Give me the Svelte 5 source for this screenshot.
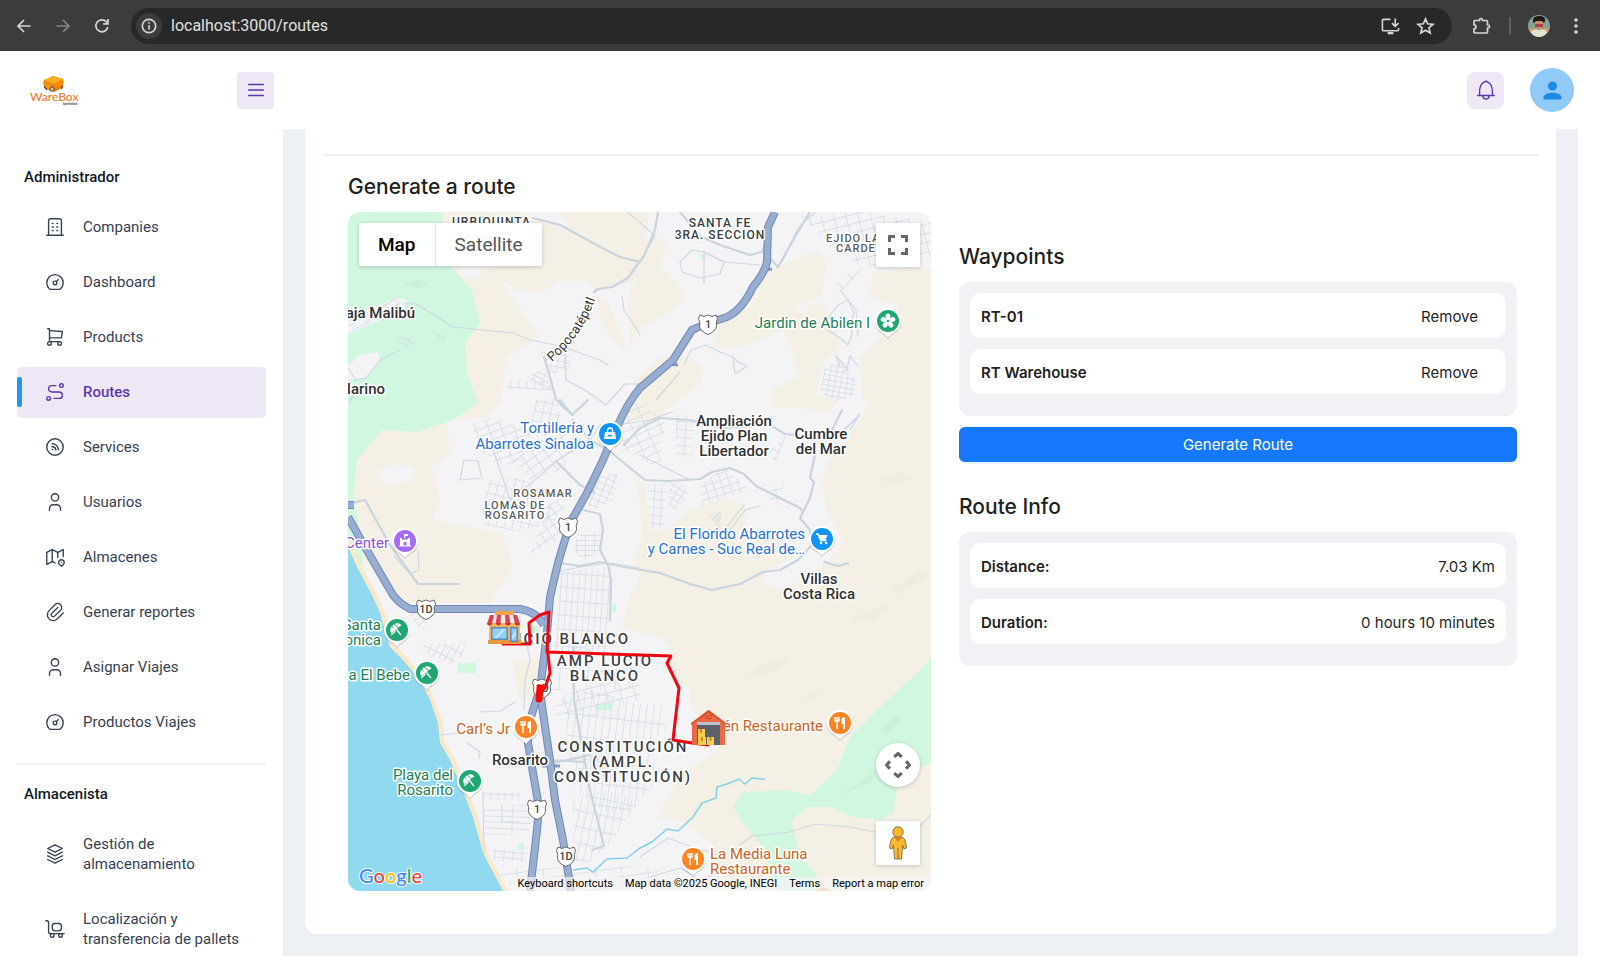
<script>
  const icons = {
    building: ['M3 21h18', 'M9 8h1', 'M9 12h1', 'M9 16h1', 'M14 8h1', 'M14 12h1', 'M14 16h1', 'M5 21V5a2 2 0 0 1 2-2h10a2 2 0 0 1 2 2v16'],
    dashboard: ['M12 11a2 2 0 1 0 0 4a2 2 0 1 0 0-4', 'M13.45 11.55L15.5 9.5', 'M6.4 20a9 9 0 1 1 11.2 0z'],
    cart: ['M6 17a2 2 0 1 0 0 4a2 2 0 1 0 0-4', 'M17 17a2 2 0 1 0 0 4a2 2 0 1 0 0-4', 'M17 17H6V3H4', 'M6 5l14 1l-1 7H6'],
    route: ['M3 19a2 2 0 1 0 4 0a2 2 0 1 0-4 0', 'M19 7a2 2 0 1 0 0-4a2 2 0 0 0 0 4z', 'M11 19h5.5a3.5 3.5 0 0 0 0-7h-8a3.5 3.5 0 0 1 0-7H13'],
    feed: ['M12 3a9 9 0 1 0 0 18a9 9 0 1 0 0-18', 'M9 8.500c4 0 6.500 3 6.500 6.500', 'M8.500 11.500c2.500 0 4 1.500 4.500 3.500', 'M9 14.500l.8.5'],
    user: ['M12 3a4 4 0 1 0 0 8a4 4 0 1 0 0-8', 'M6 21v-2a4 4 0 0 1 4-4h4a4 4 0 0 1 4 4v2'],
    map: ['M12 18.500l-3-1.500l-6 3V7l6-3l6 3l6-3v7.500', 'M9 4v13', 'M15 7v5.500', 'M21.121 20.121a3 3 0 1 0-4.242 0c.418.419 1.125 1.045 2.121 1.879c1.051-.89 1.759-1.516 2.121-1.879z', 'M19 18v.01'],
    clip: ['M15 7l-6.500 6.500a1.500 1.500 0 0 0 3 3L18 10a3 3 0 0 0-6-6l-6.500 6.500a4.500 4.500 0 0 0 9 9L21 13'],
    stack: ['M12 2L4 6l8 4l8-4l-8-4', 'M4 10l8 4l8-4', 'M4 14l8 4l8-4', 'M4 18l8 4l8-4'],
    trolley: ['M2 3h1a2 2 0 0 1 2 2v10a2 2 0 0 0 2 2h15', 'M9 9a3 3 0 0 1 3-3h4a3 3 0 0 1 3 3v2a3 3 0 0 1-3 3h-4a3 3 0 0 1-3-3z', 'M9 17a2 2 0 1 0 0 4a2 2 0 1 0 0-4', 'M18 17a2 2 0 1 0 0 4a2 2 0 1 0 0-4'],
  };

  const groups = [
    {
      title: 'Administrador',
      items: [
        ['Companies', 'building'],
        ['Dashboard', 'dashboard'],
        ['Products', 'cart'],
        ['Routes', 'route'],
        ['Services', 'feed'],
        ['Usuarios', 'user'],
        ['Almacenes', 'map'],
        ['Generar reportes', 'clip'],
        ['Asignar Viajes', 'user'],
        ['Productos Viajes', 'dashboard'],
      ],
    },
    {
      title: 'Almacenista',
      items: [
        ['Gestión de almacenamiento', 'stack'],
        ['Localización y transferencia de pallets', 'trolley'],
      ],
    },
  ];
  const active = 'Routes';

  let waypoints = $state(['RT-01', 'RT Warehouse']);
  const info = [
    ['Distance:', '7.03 Km'],
    ['Duration:', '0 hours 10 minutes'],
  ];
  const remove = (name) => (waypoints = waypoints.filter((w) => w !== name));

  const land = [
    '442,212 520,212 545,222 580,238 625,248 655,236 668,245 660,265 640,275 625,285 595,290 585,281 560,281 540,293 515,290 500,277 508,293 540,337 507,357 500,403 487,417 447,420 450,453 432,467 440,503 432,520 503,533 513,567 490,603 403,603 350,545 350,420 440,400 440,300',
    '596,296 606,300 620,330 627,353 612,340 600,320',
    '560,212 650,212 645,238 662,268 683,290 685,302 662,316 640,328 630,344 628,300 637,275 606,262 580,240',
    '777,267 817,250 827,263 822,297 800,305 825,303 833,323 840,347 823,363 817,397 838,400 830,413 800,408 770,407 773,390 797,377 793,353 783,330 740,348 713,347 718,323 750,307 767,273',
    '637,378 660,358 690,356 702,368 700,385 672,405 655,420 628,420 636,400',
    '931,267 873,273 870,297 900,307 890,330 860,357 862,400 870,402 860,420 827,463 822,483 827,510 843,543 830,560 805,578 785,592 765,584 763,573 795,556 775,538 747,530 745,505 725,497 690,510 665,530 650,530 645,484 634,478 640,500 642,540 632,560 640,575 628,600 622,628 662,638 674,655 662,668 690,690 690,703 720,750 683,773 657,817 683,822 712,843 720,891 931,891',
    '513,660 540,660 536,690 530,702 520,700 514,680',
  ];
  const parks = [
    '348,212 442,212 446,262 472,290 480,323 465,343 467,373 478,403 453,420 417,432 382,430 357,460 353,500 357,513 363,567 348,547',
    '931,658 917,673 880,707 860,727 850,737 837,770 810,795 783,790 743,792 733,807 743,823 763,847 773,877 783,891 822,891 815,873 800,857 792,820 807,807 830,807 853,817 880,820 893,813 897,787 920,767 931,763',
    '458,663 476,663 476,673 458,673',
    '596,704 612,703 611,710 596,710',
    '518,843 524,843 524,850 518,850',
    '698,256 708,252 704,260',
    '612,604 616,604 616,612 612,612',
    '530,626 540,626 540,633 530,633',
  ];
  const clearings = [
    '458,268 482,266 480,278 466,279 458,274',
    '348,318 395,298 407,300 404,310 368,325 348,334',
    '348,366 360,355 378,352 380,362 366,377 348,380',
    '377,470 400,464 414,468 412,480 384,486',
    '795,306 806,303 808,312 798,313',
  ];

  // Street grids: outline, rotation and block size.
  const districts = [
    { p: '348,318 395,298 402,304 370,324 348,332', a: -30, w: 12, h: 6 },
    { p: '396,338 409,335 415,343 404,350', a: 30, w: 4, h: 6 },
    { p: '540,352 569,345 570,368 552,374', a: 10, w: 6, h: 6 },
    { p: '507,381 548,382 556,390 507,389', a: 4, w: 8, h: 7 },
    { p: '526,376 545,368 553,395', a: 28, w: 9, h: 5 },
    { p: '536,400 556,398 562,424 540,440 530,430', a: 12, w: 8, h: 10 },
    { p: '472,425 490,418 532,430 520,462 498,466 480,450', a: -20, w: 12, h: 7 },
    { p: '512,460 562,430 586,440 560,470 530,480', a: -35, w: 11, h: 8 },
    { p: '490,480 520,478 548,492 556,520 522,532 484,525 482,500', a: 14, w: 8, h: 10 },
    { p: '548,505 566,496 560,538 530,556', a: -35, w: 8, h: 9 },
    { p: '598,476 618,473 614,500 592,510 588,504', a: 22, w: 7, h: 6 },
    { p: '577,536 602,530 602,550 584,560 574,552', a: 0, w: 9, h: 5 },
    { p: '560,572 612,566 610,612 606,652 554,650', a: 4, w: 6, h: 14 },
    { p: '630,400 665,418 660,470 625,450 620,425', a: -24, w: 13, h: 8 },
    { p: '676,414 695,416 692,460 676,455', a: 5, w: 9, h: 8 },
    { p: '648,484 667,484 664,528 650,528', a: 3, w: 7, h: 8 },
    { p: '670,480 690,490 680,508 668,510', a: 32, w: 6, h: 6 },
    { p: '700,484 724,468 750,490 728,497 702,506', a: -18, w: 8, h: 7 },
    { p: '708,516 722,511 720,528', a: 50, w: 5, h: 3 },
    { p: '768,492 784,480 782,494 778,506 770,500', a: -12, w: 8, h: 8 },
    { p: '768,452 786,434 782,450 776,462', a: 25, w: 7, h: 8 },
    { p: '800,216 860,212 931,222 931,258 878,266 856,264 830,244', a: -14, w: 12, h: 9 },
    { p: '825,366 842,362 846,372 858,382 854,395 836,402 820,392', a: 10, w: 6, h: 5 },
    { p: '836,284 856,264 864,270 842,290', a: 42, w: 9, h: 14 },
    { p: '690,612 700,612 700,640 690,640', a: 10, w: 30, h: 30 },
    { p: '640,704 662,704 667,730 652,740 655,784 632,810 606,812 575,790 562,700 590,690', a: 7, w: 7, h: 22 },
    { p: '553,700 640,664 640,700 592,716 556,720', a: -14, w: 14, h: 9 },
    { p: '553,640 640,660 640,690 553,690', a: 5, w: 14, h: 22 },
    { p: '572,800 606,790 640,800 608,846 590,862 574,862', a: 12, w: 7, h: 16 },
    { p: '484,792 520,793 519,800 484,800', a: 2, w: 7, h: 8 },
    { p: '484,806 530,804 530,834 484,835', a: 2, w: 60, h: 6 },
    { p: '492,849 526,851 526,863 494,860', a: 5, w: 9, h: 6 },
    { p: '408,610 432,606 424,630 416,624', a: -38, w: 8, h: 6 },
    { p: '420,645 466,643 462,656 452,664 430,656', a: 28, w: 6, h: 10 },
    { p: '420,870 640,866 660,872 640,891 560,891', a: -8, w: 26, h: 9 },
  ];

  const streets = [
    'M404,304L415,303L453,327L513,333L530,340L555,345L569,349L600,360L608,365',
    'M348,368L356,380L366,378L380,360L400,350',
    'M348,392L356,390L350,402',
    'M560,344L565,345L566,380L588,392L606,405L625,384L640,384',
    'M628,212L655,236L640,262',
    'M622,296L624,310L632,322L640,335',
    'M680,262L692,250L704,252L725,262L760,265',
    'M680,262L682,272L700,278L720,274L724,262L704,252L704,283',
    'M684,364L691,350L706,345L720,352L733,357L735,374L747,366L738,362L733,357',
    'M815,212L800,226L796,232L782,262',
    'M840,290L848,300L854,313L850,325L852,334L848,345L840,338L828,330L830,315L838,305L848,300L856,310L858,336',
    'M848,370L836,356L840,366M846,372L850,356L858,366',
    'M460,480L464,460L478,461L482,478Z',
    'M490,440L510,500L540,476L558,460L590,440L600,425',
    'M418,550L419,570L410,574L394,556',
    'M527,645L530,660L525,680L524,710',
    'M480,712L500,711L515,702M467,743L480,752L479,758',
    'M441,735L458,733',
    'M640,455L690,480',
    'M656,400L680,372M624,424L650,420L672,412',
    'M550,573L586,566L610,563L640,568',
    'M716,540L740,510L744,505',
    'M640,857L668,838L690,846L718,855M740,845L752,836L790,832L815,824L850,827L880,833',
    'M920,826L931,815',
    'M640,880L680,868L700,880L720,872',
    'M730,530L745,510L760,506',
    'M483,792L484,860',
    'M502,805L502,822L520,822',
    'M840,434L860,414L850,430L857,418Z',
  ];
  const avenues = [
    'M533,218L560,225L606,250L620,257L640,262',
    'M594,292L598,289L612,287L628,278L637,265L644,256L655,230L658,212',
    'M680,212L700,236L720,245L750,255L762,252L767,240',
    'M767,255L778,267L796,235L810,212',
    'M544,357L548,370L556,399L562,406L573,415',
    'M348,504L365,500L376,520L390,545L408,570L418,584L458,584',
    'M560,400L572,415L588,400',
    'M557,462L580,485L594,492M573,420L590,440L611,452L630,468L645,480L668,481L700,479L712,472L730,468L744,474L756,486L780,498L800,508L803,512L810,498L814,482L810,478L816,450',
    'M624,445L640,428L660,418L690,420L720,428L770,425L785,434L812,437L832,430L842,410',
    'M803,512L800,518L810,530L812,545L798,560L780,570L763,572L740,584L712,590L690,584L660,573L630,568L600,562L580,566L560,563',
    'M583,510L600,514L603,530L600,550L608,565L611,580L610,620',
    'M573,640L574,700L590,790L604,846L592,850',
    'M545,765L590,755M550,760L585,762',
    'M824,562L838,566L848,563',
  ];

  const highways = [
    'M348,517L365,547L390,590Q396,602 410,609L520,609Q537,612 544,625',
    'M775,212L768,227L767,262Q765,272 753,287Q742,310 727,317Q705,324 692,330L673,360L640,388Q628,402 617,427L603,460L587,493L570,523L558,563L550,597L547,633L540,690Q534,706 528,727L528,743L533,773L539,807L537,830L530,891',
    'M540,690L543,713L550,760L555,800L563,840L571,891',
    'M348,505L354,505',
  ];
  const ramps = 'M668,364L678,365M764,270L772,269M542,766L560,766';

  const routeLine =
    'M503,644L530,644L529,623L540,615L549,612L547,652L640,655L671,656L667,663L679,688L673,740L692,743L708,745M547,645L550,673L545,688L539,692';

  const labels = [
    { x: 452, y: 226, t: 'URBIQUINTA', k: 'caps mid' },
    { x: 720, y: 227, t: 'SANTA FE', k: 'caps mid c' },
    { x: 720, y: 239, t: '3RA. SECCION', k: 'caps mid c' },
    { x: 826, y: 242, t: 'EJIDO LA', k: 'caps small' },
    { x: 836, y: 252, t: 'CARDEN', k: 'caps small' },
    { x: 870, y: 328, t: 'Jardin de Abilen I', k: 'green e' },
    { x: 415, y: 318, t: 'aja Malibú', k: 'town e' },
    { x: 385, y: 394, t: 'larino', k: 'town e' },
    { x: 594, y: 433, t: 'Tortillería y', k: 'blue e' },
    { x: 594, y: 449, t: 'Abarrotes Sinaloa', k: 'blue e' },
    { x: 543, y: 497, t: 'ROSAMAR', k: 'caps small c' },
    { x: 515, y: 509, t: 'LOMAS DE', k: 'caps small c' },
    { x: 515, y: 519, t: 'ROSARITO', k: 'caps small c' },
    { x: 734, y: 426, t: 'Ampliación', k: 'town c' },
    { x: 734, y: 441, t: 'Ejido Plan', k: 'town c' },
    { x: 734, y: 456, t: 'Libertador', k: 'town c' },
    { x: 821, y: 439, t: 'Cumbre', k: 'town c' },
    { x: 821, y: 454, t: 'del Mar', k: 'town c' },
    { x: 805, y: 539, t: 'El Florido Abarrotes', k: 'blue e' },
    { x: 805, y: 554, t: 'y Carnes - Suc Real de…', k: 'blue e' },
    { x: 819, y: 584, t: 'Villas', k: 'town c' },
    { x: 819, y: 599, t: 'Costa Rica', k: 'town c' },
    { x: 389, y: 548, t: 'Center', k: 'purple e' },
    { x: 381, y: 630, t: 'Santa', k: 'green e' },
    { x: 381, y: 645, t: 'onica', k: 'green e' },
    { x: 410, y: 680, t: 'a El Bebe', k: 'green e' },
    { x: 453, y: 780, t: 'Playa del', k: 'green e' },
    { x: 453, y: 795, t: 'Rosarito', k: 'green e' },
    { x: 510, y: 734, t: 'Carl’s Jr', k: 'orange e' },
    { x: 520, y: 765, t: 'Rosarito', k: 'town c' },
    { x: 630, y: 644, t: 'ICIO BLANCO', k: 'caps large e' },
    { x: 605, y: 666, t: 'AMP LUCIO', k: 'caps large c' },
    { x: 605, y: 681, t: 'BLANCO', k: 'caps large c' },
    { x: 623, y: 752, t: 'CONSTITUCIÓN', k: 'caps large c' },
    { x: 623, y: 767, t: '(AMPL.', k: 'caps large c' },
    { x: 623, y: 782, t: 'CONSTITUCIÓN)', k: 'caps large c' },
    { x: 823, y: 731, t: 'én Restaurante', k: 'orange e' },
    { x: 710, y: 859, t: 'La Media Luna', k: 'orange' },
    { x: 710, y: 874, t: 'Restaurante', k: 'orange' },
  ];

  const shields = [
    [708, 324, '1'],
    [568, 527, '1'],
    [426, 609, '1D'],
    [542, 688, '1D'],
    [537, 809, '1'],
    [566, 856, '1D'],
  ];

  const pins = [
    [888, 321, '#1fa672', 'flower'],
    [610, 434, '#0f95f7', 'bag'],
    [822, 539, '#0f95f7', 'trolley'],
    [405, 541, '#a56cf5', 'civic'],
    [397, 630, '#1fa672', 'beach'],
    [427, 673, '#1fa672', 'beach'],
    [470, 781, '#1fa672', 'beach'],
    [526, 727, '#fb8427', 'food'],
    [840, 723, '#fb8427', 'food'],
    [693, 859, '#fb8427', 'food'],
  ];

  const shore = 'M348,547L357,567L373,597L380,613L390,647L403,660L420,680L430,700L438,723L440,743L450,760L460,783L473,817L483,853L503,891';
</script>

{#snippet icon(name)}
  <svg class="icon" viewBox="0 0 24 24" aria-hidden="true">
    {#each icons[name] as d}<path {d} />{/each}
  </svg>
{/snippet}

<div class="window">
  <header class="browser">
    <button aria-label="Back"><svg viewBox="0 0 16 16"><path d="M14.500 8H2M8 2L2 8l6 6" /></svg></button>
    <button class="dim" aria-label="Forward"><svg viewBox="0 0 16 16"><path d="M1.500 8H14M8 2l6 6l-6 6" /></svg></button>
    <button aria-label="Reload"><svg viewBox="0 0 16 16"><path d="M13.800 9a6 6 0 1 1-1.400-5.200L14 5.500M14 1v4.800H9.200" /></svg></button>
    <div class="address">
      <span class="site">
        <svg viewBox="0 0 16 16"><circle cx="8" cy="8" r="6.700" /><path d="M8 7.200v4.300M8 4.200v1.600" /></svg>
      </span>
      <input aria-label="Address" value="localhost:3000/routes" />
      <button aria-label="Install app"><svg viewBox="0 0 20 18"><path d="M10 2H2.500Q1.500 2 1.500 3v10q0 1 1 1h15q1 0 1-1v-2M15 1v8M11.500 6L15 9.500L18.500 6" /><path d="M7 16.500h6" stroke-width="2.500" /></svg></button>
      <button aria-label="Bookmark"><svg viewBox="0 0 18 18"><path d="M9 1.800l2.100 5l5.400.5l-4.100 3.500l1.300 5.300L9 13.300l-4.700 2.800l1.300-5.300L1.500 7.300l5.400-.5z" /></svg></button>
    </div>
    <button aria-label="Extensions"><svg viewBox="0 0 18 18"><path d="M2 3.500h5V3a1.500 1.500 0 0 1 3 0v.5h4q1 0 1 1V8h.5a1.500 1.500 0 0 1 0 3H15v4q0 1-1 1H2.500q-1 0-1-1v-3.200a2 2 0 0 0 0-4V4.500q0-1 1-1" /></svg></button>
    <i class="bar"></i>
    <button aria-label="Profile">
      <svg class="photo" viewBox="0 0 22 22">
        <circle cx="11" cy="11" r="11" fill="#7fa39b" />
        <path d="M1 14l5-1v4l-3 1zM21 14l-5-1v4l3 1z" fill="#dba069" />
        <path d="M3 17Q6 13 11 15q5-2 8 2q-3 5-8 5t-8-5z" fill="#e9e2cf" />
        <ellipse cx="11" cy="9" rx="5" ry="6" fill="#c58d6c" />
        <path d="M5 7Q4 1 11 1t6 5l-1 2l-2-2H8L6 8z" fill="#1d1715" />
        <path d="M7 9h8v3H7z" fill="#a5433f" />
      </svg>
    </button>
    <button class="more" aria-label="Menu"><svg class="solid" viewBox="0 0 6 18"><circle cx="3" cy="3" r="1.800" /><circle cx="3" cy="9" r="1.800" /><circle cx="3" cy="15" r="1.800" /></svg></button>
  </header>

  <header class="top">
    <a class="logo" href="#home" aria-label="WareBox">
      <svg viewBox="0 0 48 30">
        <path d="M14 5l9-4l10 3v8l-9 5l-10-4z" fill="#f99a13" />
        <path d="M14 5l9-4l10 3l-9 5z" fill="#fdae1f" />
        <path d="M24 9l9-5v8l-9 5z" fill="#ef7d0c" />
        <path d="M14 5l-1 4l11 4V9zM33 4l1 4l-10 5V9z" fill="#f28c10" />
        <path d="M14 11l3 4M31 14l2-3" stroke="#6b5334" stroke-width="1.500" />
        <circle cx="22" cy="14" r="2.200" fill="#d9c49c" stroke="#4b3c2c" />
        <text x="0" y="26" class="brand">WareBox</text>
        <text x="33" y="30" class="tag">logistics</text>
      </svg>
    </a>
    <button class="square" aria-label="Toggle menu"><svg class="icon" viewBox="0 0 24 24"><path d="M4 6h16M4 12h16M4 18h16" /></svg></button>
    <span class="grow"></span>
    <button class="square round" aria-label="Notifications">
      <svg class="icon" viewBox="0 0 24 24"><path d="M3 18h18M5 18v-4Q5 6 10 3.500q2-2 4 0Q19 6 19 14v4M8.500 18.500q.5 3.500 3.500 3.500t3.500-3.500" /></svg>
    </button>
    <button class="avatar" aria-label="Account">
      <svg viewBox="0 0 24 24"><circle cx="12" cy="8" r="4" /><path d="M12 14c-2.700 0-8 1.300-8 4v2h16v-2c0-2.700-5.300-4-8-4z" /></svg>
    </button>
  </header>

  <div class="body">
    <nav>
      {#each groups as group}
        <section>
          <h3>{group.title}</h3>
          <ul>
            {#each group.items as [label, name]}
              <li><a href="#{name}" class:active={label === active}>{@render icon(name)}<span>{label}</span></a></li>
            {/each}
          </ul>
        </section>
      {/each}
    </nav>

    <main>
      <div class="card">
        <hr />
        <div class="content">
          <h2>Generate a route</h2>
          <div class="columns">
            <div class="map">
              <svg class="canvas" viewBox="348 212 583 679" preserveAspectRatio="xMidYMid slice" role="img" aria-label="Map">
                <defs>
                  {#each districts as d, i}
                    <pattern id="grid{i}" width={d.w} height={d.h} patternUnits="userSpaceOnUse" patternTransform="rotate({d.a})">
                      <path d="M0,0H{d.w}M0,0V{d.h}" stroke="#d2dae3" stroke-width="1.400" fill="none" />
                    </pattern>
                  {/each}
                  <path id="popo" d="M552,362Q582,336 595,300" />
                </defs>
                <rect x="348" y="212" width="583" height="679" fill="#f4f4f6" />
                {#each land as p}<polygon points={p} fill="#f5f0e5" />{/each}
                <path d="M880,480l20,-8l12,6l-18,8zM850,620l30,-14l12,2l-24,14zM890,590l30,-20l8,4l-26,20zM740,680l40,-10l8,-14l-22,8zM800,700l20,-12l6,6z" fill="#efe9dc" opacity=".6" />
                {#each parks as p}<polygon points={p} fill="#d1f7e0" />{/each}
                <path d="M402,284l14,-4l14,2l-10,6zM432,330l16,8l-6,4zM840,795l18,-12l20,-14l-8,14zM880,730l14,-14l8,2l-14,16z" fill="#c4efd5" opacity=".6" />
                {#each clearings as p}<polygon points={p} fill="#f4f4f6" />{/each}
                {#each districts as d, i}<polygon points={d.p} fill="url(#grid{i})" />{/each}
                <g fill="none" stroke-linejoin="round" stroke-linecap="round">
                  <path d={shore} stroke="#fae8c8" stroke-width="9" />
                  {#each streets as d}<path {d} stroke="#cfd8e2" stroke-width="1.200" />{/each}
                  {#each avenues as d}<path {d} stroke="#c9d4dd" stroke-width="2.200" />{/each}
                </g>
                <path d="{shore}L348,891Z" fill="#90d9ee" />
                <path d="M573,870L587,868L593,872L607,859L627,858L640,848L652,842L667,829L678,831L693,817L702,803L716,798L717,787L727,784L739,779L745,784L752,778L765,779" fill="none" stroke="#84cfe8" stroke-width="1.500" />
                <g fill="none" stroke-linejoin="round">
                  <path d={ramps} stroke="#8499c0" stroke-width="3" />
                  {#each highways as d}<path {d} stroke="#7288b4" stroke-width="8" />{/each}
                  {#each highways as d}<path {d} stroke="#98add0" stroke-width="6" />{/each}
                </g>
                {#each shields as [x, y, n]}
                  <g transform="translate({x} {y})">
                    <path d="M-8,-9l4,1.500l4,-1.500l4,1.500l4,-1.500l1.500,3.500q-2,4 -1,8q-1,5 -8.500,8q-7.500,-3 -8.500,-8q1,-4 -1,-8z" fill="#fff" stroke="#666" />
                    <text class="shield" y="4">{n}</text>
                  </g>
                {/each}
                {#each labels as l}<text x={l.x} y={l.y} class={l.k}>{l.t}</text>{/each}
                <text class="street"><textPath href="#popo">Popocatépetl</textPath></text>
                {#each pins as [x, y, color, glyph]}
                  <g transform="translate({x} {y})">
                    <path d="M0,17Q-3,13 -9,9.500A13,13 0 1 1 9,9.500Q3,13 0,17z" fill="#000" opacity=".22" transform="translate(0 1)" />
                    <path d="M0,17Q-3,13 -9,9.500A13,13 0 1 1 9,9.500Q3,13 0,17z" fill="#fff" />
                    <circle r="11" fill={color} />
                    {#if glyph === 'flower'}
                      {#each [0, 72, 144, 216, 288] as r}<ellipse cx="0" cy="-4.600" rx="2.400" ry="3" fill="#fff" transform="rotate({r})" />{/each}
                      <circle r="1.800" fill="none" stroke="#fff" stroke-width="1" />
                    {:else if glyph === 'bag'}
                      <path d="M-5,-2h10l1,7h-12z" fill="#fff" />
                      <path d="M-2.500,-2v-1.500a2.500,2.500 0 0 1 5,0V-2" fill="none" stroke="#fff" stroke-width="1.300" />
                      <path d="M-2,1q2,2 4,0" stroke={color} stroke-width="1.200" fill="none" />
                    {:else if glyph === 'trolley'}
                      <path d="M-6,-5h2l2.500,6.500h6" fill="none" stroke="#fff" stroke-width="1.300" />
                      <path d="M-3.500,-4h9l-2,5h-5z" fill="#fff" />
                      <circle cx="-1" cy="4" r="1.300" fill="#fff" /><circle cx="4" cy="4" r="1.300" fill="#fff" />
                    {:else if glyph === 'civic'}
                      <path d="M-5,5v-8h2v1.500h6v-1.500h2v8h-3.500v-4h-3v4zM-1,-3v-4h4v2h-2.800v2z" fill="#fff" />
                      <path d="M-6,5h12" stroke="#fff" />
                    {:else if glyph === 'beach'}
                      <g transform="rotate(-38)">
                        <path d="M-6.500,-1A6.500,5.500 0 0 1 -1.800,-6.200L-2,-1zM-1,-6.400h2l1.200,5.400h-4.400zM1.800,-6.200A6.500,5.500 0 0 1 6.500,-1H3z" fill="#fff" />
                        <path d="M0,-1V6.500" stroke="#fff" stroke-width="1.400" />
                      </g>
                      <path d="M-6,5l4.500,-4" stroke="#fff" stroke-width="1.400" />
                    {:else}
                      <path d="M-5,-6v4.500M-3,-6v4.500M-1,-6v4.500M-5.500,-2h5M-3,-2V6" stroke="#fff" stroke-width="1.400" fill="none" />
                      <path d="M1.500,1V-3Q1.500,-6 5,-6V6H3.200V1z" fill="#fff" />
                    {/if}
                  </g>
                {/each}
                <circle cx="823" cy="900" r="12" fill="#f7a36c" />
                <path d={routeLine} fill="none" stroke="#ee0610" stroke-width="3" stroke-linejoin="round" stroke-linecap="round" />
                <path d="M540,688L539,699" stroke="#ff0505" stroke-width="7" stroke-linecap="round" />
                <g transform="translate(487 611)">
                  <path d="M2,10h31v22H2z" fill="#fbb257" />
                  <path d="M1,29h33v4H1z" fill="#e9963f" />
                  <path d="M8,0h19v5H8z" fill="#f7a24a" />
                  <path d="M3,4h29l3,8H0z" fill="#e9eef4" />
                  <path d="M3,4h4l-2,9H0zM10,4h4l-.500,9h-5zM18,4h4l1.500,9h-5zM26,4h4l3,9h-5z" fill="#e0434c" />
                  <path d="M0,12h5a2.500,2.500 0 0 1-5,0zM9,12h5a2.500,2.500 0 0 1-5,0zM18.500,12h5a2.500,2.500 0 0 1-5,0zM28,12h5a2.500,2.500 0 0 1-5,0z" fill="#c9303c" />
                  <path d="M4,16h17v13H4zM23,16h8v15h-8z" fill="#5f89b8" />
                  <path d="M5.500,17.500h14v10h-14zM24.500,17.500h5v12h-5z" fill="#8fd0f5" />
                  <path d="M7,27l9,-9h3l-9,9zM25,25l4,-5v4l-4,4z" fill="#c6e8fb" />
                </g>
                <g transform="translate(691 710)">
                  <path d="M1,35V13L17.500,0L34,13v22z" fill="#ee6844" />
                  <path d="M0,13L17.500,0L35,13v2L17.500,3L0,15z" fill="#d9532f" />
                  <path d="M14,6h7M14,8.500h7" stroke="#c5462a" stroke-width="1.200" />
                  <path d="M6,12h23v23H6z" fill="#5b626c" />
                  <path d="M6,12h23v3H6z" fill="#b9c2cb" />
                  <path d="M7,19h7v8H7zM7,27h8v8H7zM16,27h7v8h-7z" fill="#fbcf4b" />
                  <path d="M9,19h2v4H9zM10,27h2v4h-2zM18.500,27h2v4h-2z" fill="#c98a2b" />
                </g>
                <g class="google" transform="translate(359 883)">
                  <text><tspan fill="#4285f4">G</tspan><tspan fill="#ea4335">o</tspan><tspan fill="#fbbc05">o</tspan><tspan fill="#4285f4">g</tspan><tspan fill="#34a853">l</tspan><tspan fill="#ea4335">e</tspan></text>
                </g>
              </svg>

              <div class="types">
                <button class="on">Map</button>
                <button>Satellite</button>
              </div>
              <button class="ctl full" aria-label="Toggle fullscreen view"><svg viewBox="0 0 20 20"><path d="M1.500 7V1.500H7M13 1.500h5.500V7M18.500 13v5.500H13M7 18.500H1.500V13" /></svg></button>
              <div class="lower">
                <button class="ctl pan" aria-label="Map camera controls"><svg viewBox="0 0 24 24"><path d="M8.500 4.500L12 1.500l3.500 3M8.500 19.500l3.500 3l3.500-3M4.500 8.500L1.500 12l3 3.500M19.500 8.500l3 3.500l-3 3.500" /></svg></button>
                <button class="ctl" aria-label="Street View Pegman">
                  <svg class="pegman" viewBox="0 0 20 34"><path d="M6 11h8q3 1 3.500 5l1 6l-2.500 1l-1.500-4L13.500 33h-7L5.500 19L4 23l-2.500-1l1-6Q3 12 6 11z" /><path d="M6.500 11.500h7L10 16z" fill="#e27b28" stroke="none" /><path d="M10 22v11" /><circle cx="10" cy="6" r="5.200" /></svg>
                </button>
              </div>
              <div class="credits">
                <a href="#keys">Keyboard shortcuts</a><span>Map data ©2025 Google, INEGI</span><a href="#terms">Terms</a><a href="#report">Report a map error</a>
              </div>
            </div>

            <div class="side">
              <h2>Waypoints</h2>
              <ul class="panel">
                {#each waypoints as name}
                  <li><strong>{name}</strong><button class="link" onclick={() => remove(name)}>Remove</button></li>
                {/each}
              </ul>
              <button class="primary">Generate Route</button>
              <h2 class="next">Route Info</h2>
              <ul class="panel">
                {#each info as [label, value]}
                  <li><strong>{label}</strong><span>{value}</span></li>
                {/each}
              </ul>
            </div>
          </div>
        </div>
      </div>
    </main>
  </div>
</div>

<style>
  :global(body) {
    margin: 0;
    background: #fff;
  }
  * {
    box-sizing: border-box;
  }
  button,
  input {
    font: inherit;
    border: 0;
    padding: 0;
    background: none;
    color: inherit;
    cursor: pointer;
  }
  ul {
    list-style: none;
    margin: 0;
    padding: 0;
  }
  a {
    color: inherit;
    text-decoration: none;
  }
  .window {
    display: flex;
    flex-direction: column;
    height: 100vh;
    overflow: hidden;
    font-family: Roboto, sans-serif;
  }
  .icon {
    fill: none;
    stroke: currentColor;
    stroke-width: 1.500;
    stroke-linecap: round;
    stroke-linejoin: round;
  }

  .browser {
    display: flex;
    align-items: center;
    flex: none;
    height: 51px;
    padding: 0 16px;
    background: #3c3c3c;
    color: #d5d5d5;
  }
  .browser button {
    display: flex;
  }
  .browser svg {
    width: 16px;
    height: 16px;
    fill: none;
    stroke: currentColor;
    stroke-width: 1.700;
  }
  .browser > button {
    margin-right: 23px;
  }
  .browser .dim {
    color: #858585;
  }
  .address {
    display: flex;
    align-items: center;
    flex: 1;
    height: 36px;
    margin: 0 20px 0 -2px;
    padding: 0 17px 0 5px;
    gap: 16px;
    border-radius: 18px;
    background: #282828;
  }
  .site {
    display: grid;
    place-items: center;
    width: 26px;
    height: 26px;
    border-radius: 13px;
    background: #3c3c3c;
  }
  .address input {
    flex: 1;
    margin-left: -7px;
    font-size: 16px;
    color: #e0e0e0;
    outline: 0;
  }
  .address button svg,
  .address + button svg {
    width: 19px;
    height: 18px;
  }
  .browser .address + button {
    margin-right: 18px;
  }
  .bar {
    width: 2px;
    height: 18px;
    margin-right: 17px;
    background: #5e5e5e;
  }
  .browser svg.photo {
    width: 22px;
    height: 22px;
    stroke: none;
  }
  .browser .more {
    margin: 0 5px 0 0;
  }
  .browser .solid {
    width: 6px;
    height: 18px;
    fill: currentColor;
    stroke: none;
  }

  .top {
    display: flex;
    align-items: center;
    flex: none;
    height: 78px;
    padding: 0 26px 0 30px;
  }
  .logo {
    width: 207px;
  }
  .logo svg {
    display: block;
    width: 48px;
    height: 30px;
  }
  .brand {
    font: 500 12px Lato, sans-serif;
    fill: #ee7b35;
  }
  .tag {
    font: 700 4px Lato, sans-serif;
    fill: #333;
  }
  .square {
    display: grid;
    place-items: center;
    width: 37px;
    height: 37px;
    border-radius: 4px;
    background: #ede7f6;
    color: #5e35b1;
  }
  .square svg {
    width: 22px;
    height: 22px;
  }
  .round {
    border-radius: 8px;
    margin-right: 26px;
  }
  .grow {
    flex: 1;
  }
  .avatar {
    display: grid;
    place-items: center;
    width: 44px;
    height: 44px;
    border-radius: 50%;
    background: #90caf9;
  }
  .avatar svg {
    width: 27px;
    height: 27px;
    fill: #1e88e5;
  }

  .body {
    display: flex;
    flex: 1;
    min-height: 0;
    padding-right: 22px;
  }
  nav {
    flex: none;
    width: 283px;
    padding: 0 17px;
    overflow: hidden;
  }
  section {
    padding-top: 19px;
  }
  section:first-child {
    padding-top: 38px;
  }
  section + section {
    margin-top: 15px;
    border-top: 2px solid #eef2f4;
  }
  h3 {
    margin: 0 0 15px;
    padding-left: 7px;
    font-size: 15px;
    line-height: 20px;
    font-weight: 500;
    color: #121926;
  }
  nav li {
    margin-bottom: 4px;
  }
  nav a {
    position: relative;
    display: flex;
    align-items: center;
    gap: 17px;
    padding: 15px 20px 16px 27px;
    border-radius: 5px;
    font-size: 15px;
    line-height: 20px;
    color: #364152;
  }
  nav .icon {
    flex: none;
    width: 22px;
    height: 22px;
    margin: -1px 0;
  }
  nav .active {
    background: #ede7f6;
    color: #5e35b1;
    font-weight: 500;
  }
  nav .active::before {
    content: '';
    position: absolute;
    left: 0;
    top: 10px;
    bottom: 11px;
    width: 5px;
    border-radius: 2px;
    background: #2196f3;
  }

  main {
    flex: 1;
    min-width: 0;
    padding: 0 22px;
    background: #edf1f6;
    overflow: hidden;
    font-family: Inter, sans-serif;
    font-size: 15px;
    color: #1f1f1f;
  }
  .card {
    padding: 25px 17px 0;
    border-radius: 0 0 12px 12px;
    background: #fff;
  }
  hr {
    height: 2px;
    margin: 0;
    border: 0;
    background: #f0f0f0;
  }
  .content {
    padding: 17px 22px 43px 26px;
  }
  h2 {
    margin: 0 0 11px;
    font-size: 21px;
    line-height: 28px;
    font-weight: 500;
  }
  .columns {
    display: grid;
    grid-template-columns: 583fr 558fr;
    gap: 28px;
  }
  .side {
    padding-top: 31px;
  }
  .side .next {
    margin-top: 31px;
  }
  .panel {
    padding: 11px 11px 22px;
    display: grid;
    gap: 11px;
    border-radius: 11px;
    background: #f0f2f5;
  }
  .panel li {
    display: flex;
    justify-content: space-between;
    align-items: center;
    height: 45px;
    padding: 1px 11px 0;
    border-radius: 11px;
    background: #fff;
  }
  strong {
    font-weight: 600;
  }
  .link {
    padding: 0 17px;
  }
  .primary {
    display: block;
    width: 100%;
    height: 35px;
    margin-top: 11px;
    border-radius: 6px;
    background: #1677ff;
    color: #fff;
    box-shadow: 0 2px 0 rgba(5, 145, 255, 0.1);
  }

  .map {
    position: relative;
    height: 679px;
    border-radius: 12px;
    overflow: hidden;
    font-family: Roboto, sans-serif;
  }
  .canvas {
    display: block;
    width: 100%;
    height: 100%;
  }
  .canvas text {
    font-family: Roboto, sans-serif;
    font-size: 15px;
    paint-order: stroke;
    stroke: #fff;
    stroke-width: 3px;
    stroke-linejoin: round;
  }
  .canvas .town {
    font-weight: 500;
    fill: #303134;
  }
  .canvas .caps {
    font-weight: 500;
    fill: #3c4043;
    letter-spacing: 1px;
  }
  .canvas .large {
    font-size: 15px;
    letter-spacing: 2px;
  }
  .canvas .mid {
    font-size: 12px;
  }
  .canvas .small {
    font-size: 11px;
    fill: #5a5d61;
  }
  .canvas .street {
    font-size: 13px;
    fill: #303134;
  }
  .canvas .shield {
    font-size: 11px;
    font-weight: 500;
    text-anchor: middle;
    fill: #444;
    stroke: none;
  }
  .green {
    fill: #1b8058;
  }
  .blue {
    fill: #2870cf;
  }
  .purple {
    fill: #8b53d6;
  }
  .orange {
    fill: #cb6324;
  }
  .c {
    text-anchor: middle;
  }
  .e {
    text-anchor: end;
  }
  .canvas .google text {
    font-family: Lato, sans-serif;
    font-size: 20px;
    font-weight: 500;
    stroke-width: 2px;
  }
  .types {
    position: absolute;
    left: 11px;
    top: 11px;
    display: flex;
    border-radius: 2px;
    background: #fff;
    box-shadow: 0 1px 4px rgba(0, 0, 0, 0.2);
    font-size: 19px;
    color: #565656;
  }
  .types button {
    height: 43px;
    padding: 0 19px;
  }
  .types .on {
    font-weight: 500;
    color: #000;
    border-right: 1px solid #e6e6e6;
  }
  .ctl {
    display: grid;
    place-items: center;
    width: 44px;
    height: 44px;
    border-radius: 2px;
    background: #fff;
    box-shadow: 0 1px 4px rgba(0, 0, 0, 0.2);
  }
  .ctl svg {
    width: 20px;
    height: 20px;
    fill: none;
    stroke: #666;
    stroke-width: 3;
  }
  .full {
    position: absolute;
    right: 11px;
    top: 11px;
  }
  .lower {
    position: absolute;
    right: 11px;
    bottom: 26px;
    display: grid;
    gap: 34px;
  }
  .ctl.pan {
    border-radius: 50%;
  }
  .pan svg {
    width: 26px;
    height: 26px;
  }
  .ctl .pegman {
    width: 20px;
    height: 34px;
    fill: #fbb92c;
    stroke: #8a7350;
    stroke-width: 1;
  }
  .credits {
    position: absolute;
    right: 0;
    bottom: 0;
    display: flex;
    gap: 12px;
    padding: 0 7px;
    background: rgba(245, 245, 245, 0.7);
    font-size: 11px;
    line-height: 14px;
    color: #000;
  }
</style>
